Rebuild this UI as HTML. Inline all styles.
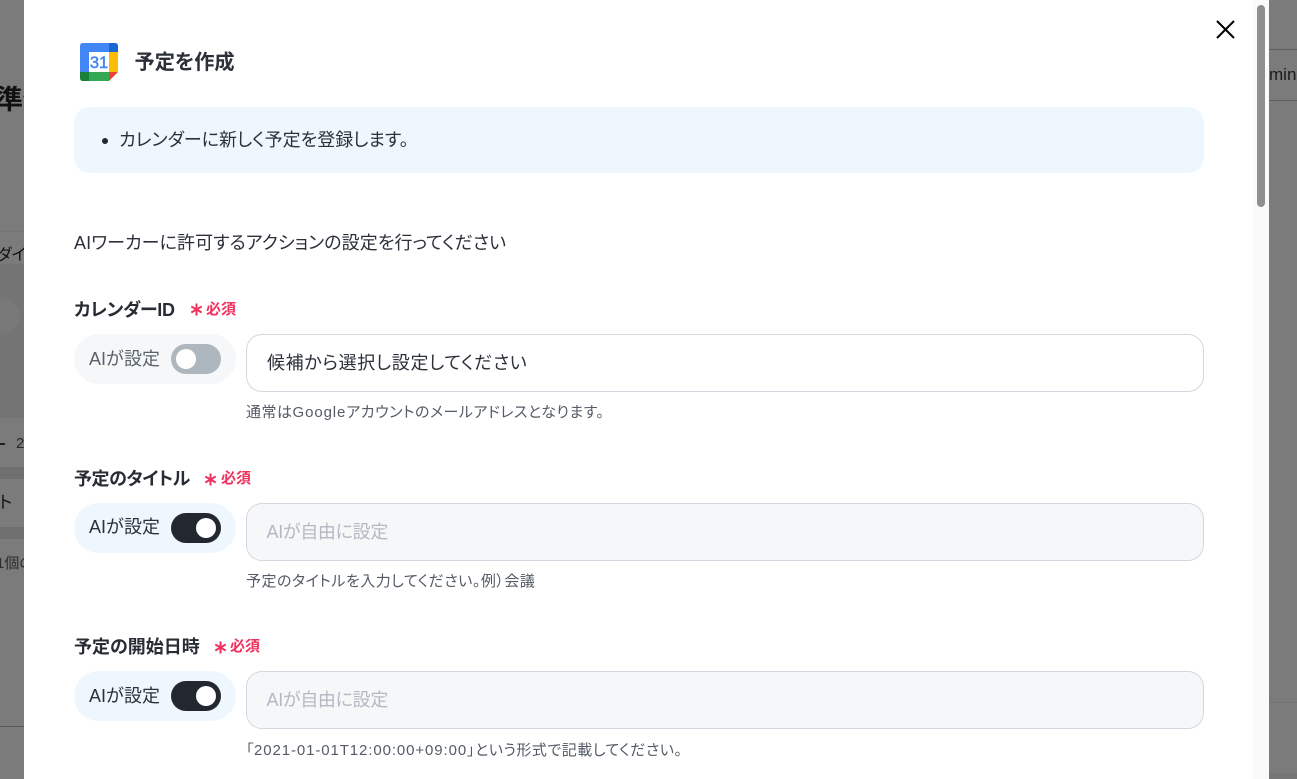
<!DOCTYPE html>
<html lang="ja"><head><meta charset="utf-8"><title>予定を作成</title>
<style>
*{box-sizing:border-box}
html,body{margin:0;width:1297px;height:779px;overflow:hidden;background:#7b7b7b}
body{position:relative;font-family:"Liberation Sans","Noto Sans CJK JP",sans-serif;color:#22262e;font-feature-settings:"palt"}
.a{position:absolute;white-space:nowrap}
.modal{position:absolute;left:23.5px;top:-20px;width:1245px;height:819px;background:#fff;border-radius:12px;overflow:hidden}
.track{position:absolute;left:1253px;top:0;width:15.5px;height:779px;background:#fafafa}
.thumb{position:absolute;left:1256.5px;top:5px;width:8.5px;height:202px;border-radius:5px;background:#8f8f8f}
.info{position:absolute;left:74px;top:107px;width:1130px;height:66px;border-radius:16px;background:#eef6fe}
.lab{font-size:18px;font-weight:700;line-height:24px;color:#282c34}
.req{font-size:15px;font-weight:700;color:#f0325f;line-height:20px}
.pill{position:absolute;left:74px;width:162px;height:50px;border-radius:25px;background:#eef6fe}
.pill.off{background:#f5f7f9}
.pill span{position:absolute;left:15px;top:13px;font-size:18px;line-height:24px;color:#2b3039;white-space:nowrap;font-feature-settings:normal}
.pill.off span{color:#5a626c}
.tg{position:absolute;left:97px;top:10px;width:50px;height:30px;border-radius:15px;background:#23272f}
.tg i{position:absolute;left:25px;top:5px;width:20px;height:20px;border-radius:50%;background:#fff}
.off .tg{background:#aeb6be}
.off .tg i{left:5px}
.inp{position:absolute;left:246px;width:958px;height:58px;border:1px solid #d3d8e0;border-radius:16px;background:#f6f7f9;font-size:18px;line-height:56px;padding-left:19.5px;color:#b2b9c2;white-space:nowrap;letter-spacing:-.3px}
.inp.w{background:#fff;color:#2b3039;letter-spacing:.65px;padding-left:20px}
.hint{font-size:15px;line-height:20px;color:#545b65;letter-spacing:.5px}
.l{letter-spacing:.9px}
</style></head><body>
<div class="a" style="left:-4px;top:83px;font-size:27px;font-weight:700;color:#111;line-height:34px">準備</div>
<div class="a" style="left:0;top:231px;width:24px;height:1px;background:#767676"></div>
<div class="a" style="left:-3px;top:245px;font-size:16px;color:#101010;line-height:22px;width:27px;overflow:hidden">ダイ</div>
<div class="a" style="left:0;top:264px;width:24px;height:154px;background:#747474"></div>
<div class="a" style="left:-50px;top:293px;width:70px;height:46px;border-radius:50%;background:#787878"></div>
<div class="a" style="left:0;top:418px;width:24px;height:49px;background:#7b7b7b"></div>
<div class="a" style="left:0;top:443px;width:5px;height:2px;background:#222"></div>
<div class="a" style="left:16px;top:434px;font-size:15px;color:#2a2a2a;line-height:20px">2</div>
<div class="a" style="left:0;top:467px;width:24px;height:12px;background:#6f6f6f"></div>
<div class="a" style="left:-1px;top:491px;font-size:17px;color:#111;line-height:24px;width:25px;overflow:hidden">ト</div>
<div class="a" style="left:0;top:527px;width:24px;height:12px;background:#6f6f6f"></div>
<div class="a" style="left:-4px;top:554px;font-size:15px;color:#2c2c2c;line-height:20px;width:28px;overflow:hidden">1個の</div>
<div class="a" style="left:0;top:726px;width:24px;height:1px;background:#555b60"></div>
<div class="a" style="left:1269px;top:49px;width:28px;height:1px;background:#5a5f63"></div>
<div class="a" style="left:1269px;top:100px;width:28px;height:1px;background:#5a5f63"></div>
<div class="a" style="left:1269px;top:64px;font-size:17px;line-height:22px;color:#1a1a1a;width:28px;overflow:hidden">min</div>
<div class="a" style="left:1269px;top:702px;width:28px;height:1px;background:#747474"></div>
<div class="a" style="left:1269px;top:773px;width:28px;height:6px;background:#767676"></div>

<div class="modal"></div>
<div class="track"></div><div class="thumb"></div>

<svg class="a" style="left:1215px;top:19px" width="21" height="21" viewBox="0 0 21 21"><path d="M2 2L19 19M19 2L2 19" stroke="#000" stroke-width="2" fill="none"/></svg>

<svg class="a" style="left:80px;top:43px" width="38" height="38" viewBox="0 0 38 38">
<path d="M9 0H29V9H9V29H0V3Q0 0 3 0Z" fill="#4285f4"/>
<path d="M29 0H35Q38 0 38 3V9H29Z" fill="#1967d2"/>
<rect x="29" y="9" width="9" height="20" fill="#fbbc04"/>
<rect x="9" y="29" width="20" height="9" fill="#34a853"/>
<path d="M0 29H9V38H3Q0 38 0 35Z" fill="#188038"/>
<path d="M29 29H38L29 38Z" fill="#ea4335"/>
<rect x="9" y="9" width="20" height="20" fill="#fff"/>
<text x="19" y="25" text-anchor="middle" font-family="Liberation Sans,sans-serif" font-size="16.5" fill="#4285f4" stroke="#4285f4" stroke-width=".5">31</text>
</svg>
<div class="a" style="left:134.5px;top:49px;font-size:20.2px;font-weight:700;line-height:28px;color:#2b2f37">予定を作成</div>

<div class="info"></div>
<div class="a" style="left:102px;top:138px;width:6px;height:6px;border-radius:50%;background:#23272f"></div>
<div class="a" style="left:119px;top:128px;font-size:18px;line-height:24px;color:#2b3039">カレンダーに新しく予定を登録します。</div>

<div class="a" style="left:74px;top:231px;font-size:18px;line-height:24px;color:#2b3039;letter-spacing:.08px">AIワーカーに許可するアクションの設定を行ってください</div>

<div class="a lab" style="left:74px;top:298px;letter-spacing:-.3px">カレンダーID</div>
<svg class="a" style="left:190px;top:303px" width="13" height="13" viewBox="0 0 13 13"><path d="M6.5 0.5V12.5M1.3 3.5L11.7 9.5M11.7 3.5L1.3 9.5" stroke="#f0325f" stroke-width="2"/></svg>
<div class="a req" style="left:206px;top:300px">必須</div>
<div class="pill off" style="top:334px"><span>AIが設定</span><div class="tg"><i></i></div></div>
<div class="inp w" style="top:334px">候補から選択し設定してください</div>
<div class="a hint" style="left:246px;top:403px">通常は<span class="l">Google</span>アカウントのメールアドレスとなります。</div>

<div class="a lab" style="left:74px;top:467px;letter-spacing:-.45px">予定のタイトル</div>
<svg class="a" style="left:204px;top:473px" width="13" height="13" viewBox="0 0 13 13"><path d="M6.5 0.5V12.5M1.3 3.5L11.7 9.5M11.7 3.5L1.3 9.5" stroke="#f0325f" stroke-width="2"/></svg>
<div class="a req" style="left:221px;top:469px">必須</div>
<div class="pill" style="top:503px"><span style="top:12px">AIが設定</span><div class="tg"><i></i></div></div>
<div class="inp" style="top:503px">AIが自由に設定</div>
<div class="a hint" style="left:246px;top:572px">予定のタイトルを入力してください。例）会議</div>

<div class="a lab" style="left:74px;top:635px">予定の開始日時</div>
<svg class="a" style="left:214px;top:641px" width="13" height="13" viewBox="0 0 13 13"><path d="M6.5 0.5V12.5M1.3 3.5L11.7 9.5M11.7 3.5L1.3 9.5" stroke="#f0325f" stroke-width="2"/></svg>
<div class="a req" style="left:230px;top:637px">必須</div>
<div class="pill" style="top:671px"><span>AIが設定</span><div class="tg"><i></i></div></div>
<div class="inp" style="top:671px">AIが自由に設定</div>
<div class="a hint" style="left:246px;top:741px">「<span class="l">2021-01-01T12:00:00+09:00</span>」という形式で記載してください。</div>
</body></html>
